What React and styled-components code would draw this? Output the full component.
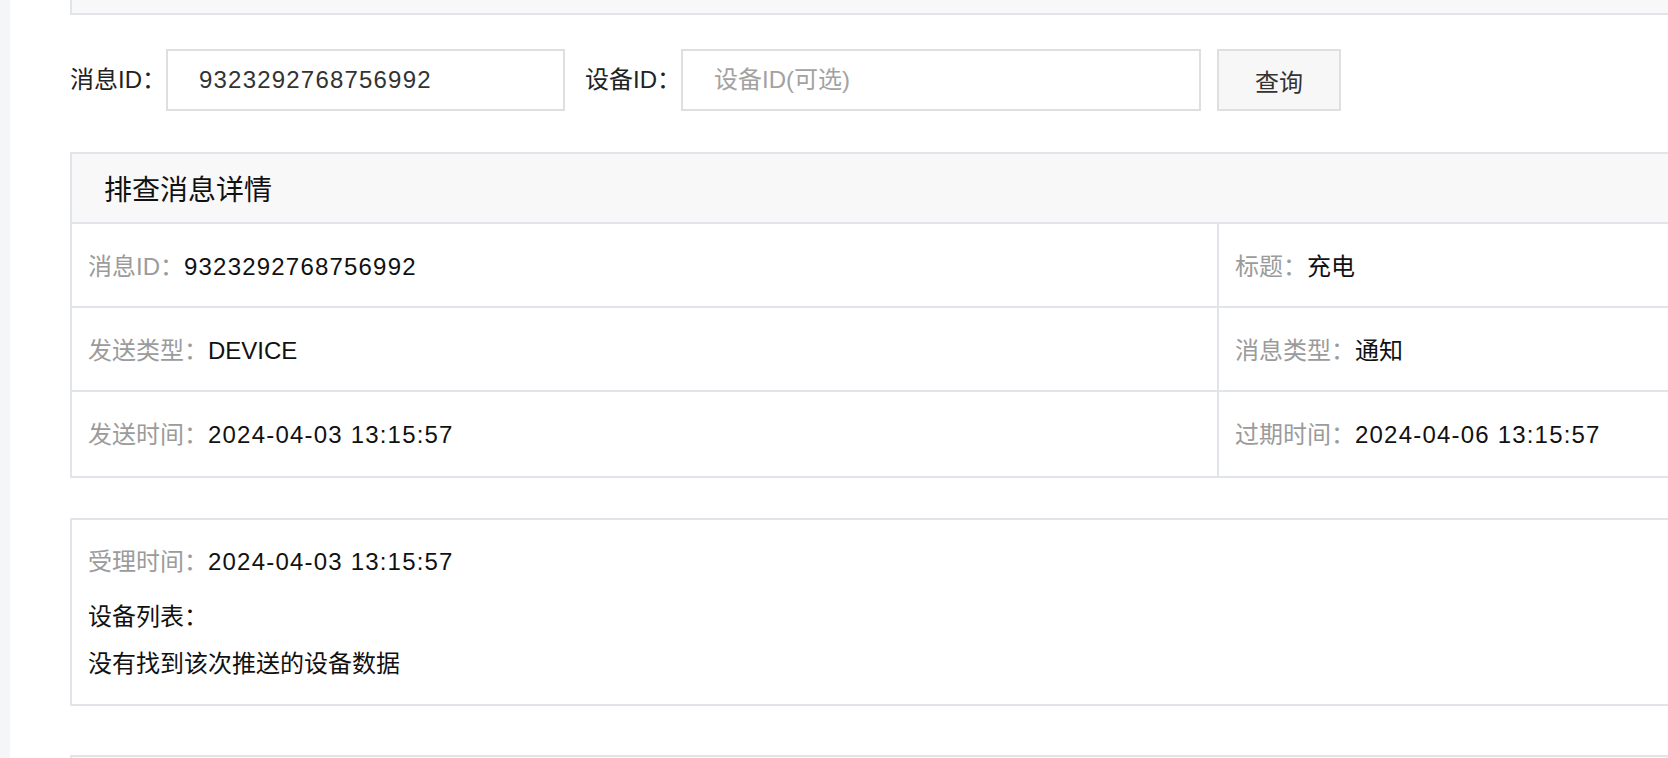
import React from "react";
import styled, { createGlobalStyle } from "styled-components";

const GlobalStyle = createGlobalStyle`
  html, body {
    margin: 0;
    padding: 0;
    overflow: hidden;
    background: #fff;
    font-family: "Liberation Sans", "Noto Sans CJK SC", sans-serif;
    color: #222;
  }
  * {
    box-sizing: border-box;
  }
`;

const Page = styled.div`
  display: flex;
  min-height: 100vh;
`;

const SideStrip = styled.div`
  width: 10px;
  flex-shrink: 0;
  background: #f5f6f8;
`;

const Main = styled.div`
  padding-left: 60px;
  width: 2358px;
  flex-shrink: 0;
`;

const PrevCard = styled.div`
  height: 15px;
  background: #f8f8f8;
  border: 2px solid #e1e5ea;
  border-top: none;
`;

const SearchBar = styled.div`
  display: flex;
  align-items: center;
  margin-top: 34px;
  height: 62px;
`;

const FieldLabel = styled.label`
  width: 96px;
  flex-shrink: 0;
  margin-left: ${(props) => props.$gap || 0}px;
  margin-bottom: 6px;
  font-size: 24px;
  color: #222;
  white-space: nowrap;
`;

const TextInput = styled.input`
  width: ${(props) => props.$w}px;
  height: 62px;
  border: 2px solid #dedfe1;
  padding: 0 31px;
  font-family: inherit;
  font-size: 24px;
  letter-spacing: 1.2px;
  color: #333;
  outline: none;
  &::placeholder {
    color: #a2a2a2;
    letter-spacing: 0;
  }
`;

const QueryButton = styled.button`
  width: 124px;
  height: 62px;
  margin-left: 16px;
  border: 2px solid #dedfe1;
  background: #f7f7f7;
  font-family: inherit;
  font-size: 24px;
  color: #333;
  cursor: pointer;
`;

const Panel = styled.div`
  margin-top: 41px;
  width: 2298px;
  border: 2px solid #e1e5ea;
`;

const PanelHeader = styled.div`
  height: 70px;
  display: flex;
  align-items: center;
  padding-left: 32px;
  background: #f8f8f8;
  border-bottom: 2px solid #e1e5ea;
  font-size: 28px;
  color: #111;
`;

const InfoGrid = styled.div`
  display: grid;
  grid-template-columns: 1147px 1fr;
`;

const InfoCell = styled.div`
  height: 84px;
  padding-top: 3px;
  line-height: 80px;
  padding-left: 16px;
  font-size: 24px;
  white-space: nowrap;
  border-bottom: ${(props) => (props.$last ? "none" : "2px solid #e1e5ea")};
  border-right: ${(props) => (props.$left ? "2px solid #e1e5ea" : "none")};
`;

const InfoLabel = styled.span`
  color: #9b9b9b;
`;

const InfoValue = styled.span`
  color: #111;
  letter-spacing: ${(props) => (props.$num ? "1.2px" : "0")};
`;

const DetailCard = styled.div`
  margin-top: 40px;
  width: 2298px;
  border: 2px solid #e1e5ea;
  padding: 24px 16px 22px;
  font-size: 24px;
`;

const DetailLine = styled.div`
  line-height: 36px;
  margin-bottom: ${(props) => props.$space || 0}px;
  color: #111;
`;

const NextCard = styled.div`
  margin-top: 49px;
  width: 2298px;
  height: 80px;
  background: #f8f8f8;
  border: 2px solid #e1e5ea;
`;

const rows = [
  [
    { label: "消息ID：", value: "9323292768756992", num: true },
    { label: "标题：", value: "充电" },
  ],
  [
    { label: "发送类型：", value: "DEVICE" },
    { label: "消息类型：", value: "通知" },
  ],
  [
    { label: "发送时间：", value: "2024-04-03 13:15:57", num: true },
    { label: "过期时间：", value: "2024-04-06 13:15:57", num: true },
  ],
];

const App = () => {
  return (
    <>
      <GlobalStyle />
      <Page>
        <SideStrip />
        <Main>
          <PrevCard />
          <SearchBar>
            <FieldLabel>消息ID：</FieldLabel>
            <TextInput $w={399} defaultValue="9323292768756992" />
            <FieldLabel $gap={20}>设备ID：</FieldLabel>
            <TextInput $w={520} placeholder="设备ID(可选)" />
            <QueryButton>查询</QueryButton>
          </SearchBar>
          <Panel>
            <PanelHeader>排查消息详情</PanelHeader>
            <InfoGrid>
              {rows.map((row, i) =>
                row.map((cell, j) => (
                  <InfoCell
                    key={`${i}-${j}`}
                    $left={j === 0}
                    $last={i === rows.length - 1}
                  >
                    <InfoLabel>{cell.label}</InfoLabel>
                    <InfoValue $num={cell.num}>{cell.value}</InfoValue>
                  </InfoCell>
                ))
              )}
            </InfoGrid>
          </Panel>
          <DetailCard>
            <DetailLine $space={19}>
              <InfoLabel>受理时间：</InfoLabel>
              <InfoValue $num>2024-04-03 13:15:57</InfoValue>
            </DetailLine>
            <DetailLine $space={11}>设备列表：</DetailLine>
            <DetailLine>没有找到该次推送的设备数据</DetailLine>
          </DetailCard>
          <NextCard />
        </Main>
      </Page>
    </>
  );
};

export default App;
